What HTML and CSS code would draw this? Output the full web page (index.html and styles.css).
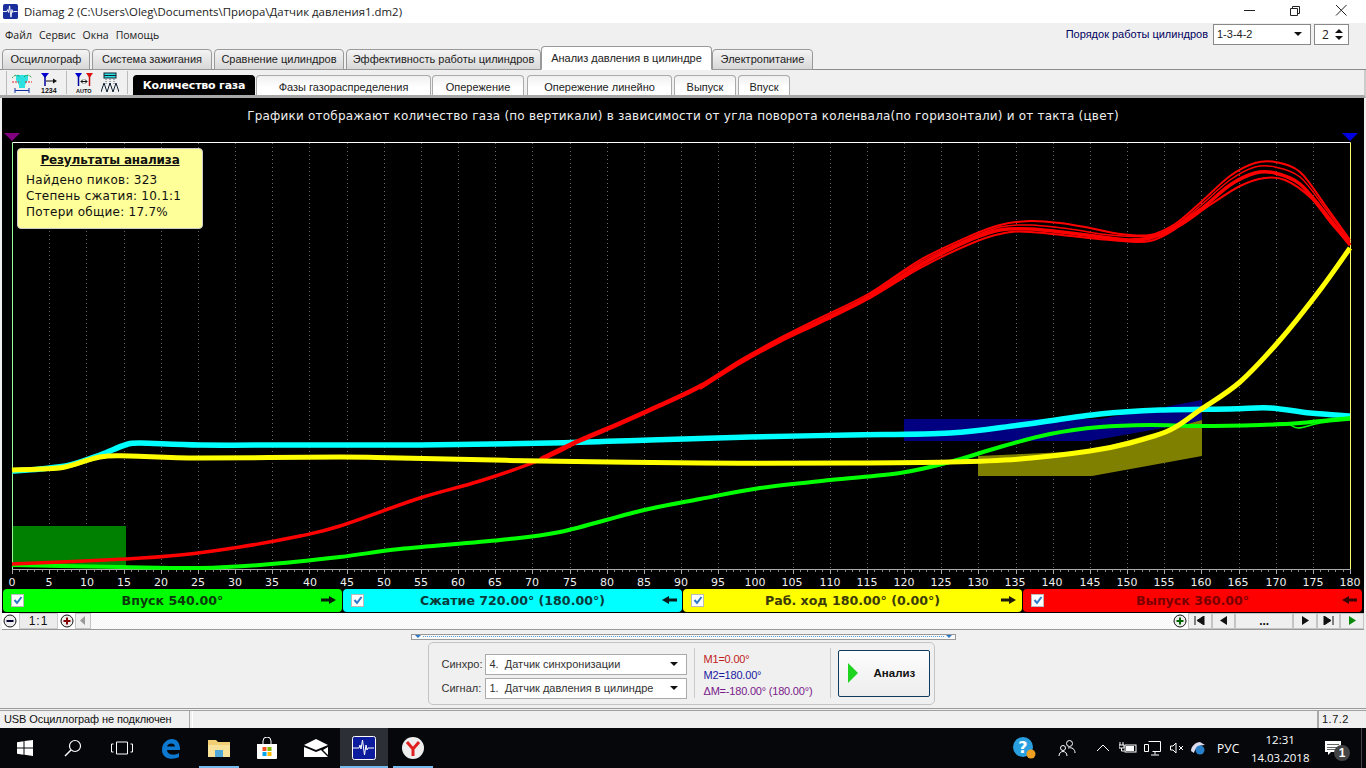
FILE: index.html
```html
<!DOCTYPE html>
<html lang="ru">
<head>
  <meta charset="UTF-8">
  <title>Diamag 2</title>
  <link rel="stylesheet" href="styles.css">
</head>
<body>
  <div class="title-bar">
    <svg class="app-icon" width="15" height="15" viewBox="0 0 16 16"><rect width="16" height="16" rx="2" fill="#1a2f9c"/><path d="M0 8h4l1-2 1 3 1-7 1.500 12 1-8 1 3 1-1h4" fill="none" stroke="#fff" stroke-width="1"/></svg>
    <span class="title-text">Diamag 2 (C:\Users\Oleg\Documents\Приора\Датчик давления1.dm2)</span>
    <div class="win-controls">
      <svg width="46" height="22" viewBox="0 0 46 22"><path d="M18 10.500h11" stroke="#222"/></svg>
      <svg width="46" height="22" viewBox="0 0 46 22"><path d="M18.500 8.500h7v7h-7zM20.500 8.500v-2h7v7h-2" fill="none" stroke="#222"/></svg>
      <svg width="46" height="22" viewBox="0 0 46 22"><path d="M18 5l10.500 10.500M28.500 5L18 15.500" stroke="#222"/></svg>
    </div>
  </div>

  <div class="menu-bar">
    <span>Файл</span><span>Сервис</span><span>Окна</span><span>Помощь</span>
    <div class="order">
      <span class="order-label">Порядок работы цилиндров</span>
      <div class="combo combo-order"><span>1-3-4-2</span><i class="caret"></i></div>
      <div class="spin"><span>2</span><span class="spin-btns"><i class="up"></i><i class="caret"></i></span></div>
    </div>
  </div>

  <div class="main-tabs">
    <div class="tab t1">Осциллограф</div>
    <div class="tab t2">Система зажигания</div>
    <div class="tab t3">Сравнение цилиндров</div>
    <div class="tab t4">Эффективность работы цилиндров</div>
    <div class="tab active t5">Анализ давления в цилиндре</div>
    <div class="tab t6">Электропитание</div>
  </div>

  <div class="sub-bar">
    <div class="tools">
      <svg width="20" height="22" viewBox="0 0 20 22"><path d="M4 3h12v5l-3 5v3H7v-3L4 8z" fill="#2ee0e0"/><path d="M0 6q4-5 8-1M12 5q4-4 8 1" fill="none" stroke="#1a9a3a" stroke-dasharray="2 1"/><path d="M0 10h7M13 10h7" stroke="#d22" stroke-dasharray="2 1"/><path d="M3 16v5M17 16v5M3 18.500h14" stroke="#1030a0"/></svg>
      <svg width="18" height="22" viewBox="0 0 18 22"><path d="M1 1h8L5 6z" fill="#0000d0"/><path d="M5 4v10" stroke="#0000a0" stroke-width="1.500"/><path d="M6 9h9" stroke="#111"/><path d="M13 6.500L17 9l-4 2.500z" fill="#111"/><text x="1" y="21" class="tool-text">1234</text></svg>
      <span class="tool-sep"></span>
      <svg width="18" height="22" viewBox="0 0 18 22"><path d="M0 1h7L3.500 6z" fill="#0000d0"/><path d="M11 1h7l-3.500 5z" fill="#e01010"/><path d="M3.500 4v10" stroke="#0000a0" stroke-width="1.500"/><path d="M14.500 4v10" stroke="#c01010" stroke-width="1.500"/><path d="M6 9.500h6M6 9.500l2-2M6 9.500l2 2M12 9.500l-2-2M12 9.500l-2 2" stroke="#111"/><text x="1" y="21" class="tool-text tool-auto">AUTO</text></svg>
      <svg width="18" height="22" viewBox="0 0 18 22"><rect x="3" y="1" width="12" height="5" fill="#2ee0e0" stroke="#123"/><path d="M3 3.500h12" stroke="#123"/><path d="M5 7v6M9 7v6M13 7v6" stroke="#567" stroke-dasharray="1 1"/><path d="M0 20l3-9 3 9 3-9 3 9 3-9 3 9" fill="none" stroke="#123"/></svg>
      <span class="tool-sep"></span>
    </div>
    <div class="sub-tab current s1">Количество газа</div>
    <div class="sub-tab s2">Фазы газораспределения</div>
    <div class="sub-tab s3">Опережение</div>
    <div class="sub-tab s4">Опережение линейно</div>
    <div class="sub-tab s5">Выпуск</div>
    <div class="sub-tab s6">Впуск</div>
  </div>

  <div class="chart-panel">
    <div class="chart-title">Графики отображают количество газа (по вертикали) в зависимости от угла поворота коленвала(по горизонтали) и от такта (цвет)</div>

    <svg class="chart" id="chart" width="1362" height="462" viewBox="2 126 1362 462">
      <polygon points="4,133 20,133 12,141" fill="#800080"/>
      <polygon points="1342,133 1358,133 1350,141" fill="#0000e0"/>
      <g id="grid"></g>
      <rect x="13" y="526" width="113" height="41" fill="#008000"/>
      <polygon points="904,419 1100,419 1202,400 1202,421 1090,441 904,441" fill="#000080"/>
      <polygon points="978,456 1090,451 1202,420 1202,456 1092,476 978,476" fill="#808000"/>
      <path d="M12.500 142.500H1350.500" stroke="#fff"/>
      <path d="M12.500 142.500V569" stroke="#9f9"/>
      <path d="M1350.500 142.500V569" stroke="#ff6"/>
      <path d="M12 569.500H1351" stroke="#aaa"/>
      <g id="curves"></g>
      <g class="axis-labels">
        <text x="12" y="586">0</text><text x="49" y="586">5</text><text x="87" y="586">10</text><text x="124" y="586">15</text><text x="161" y="586">20</text><text x="198" y="586">25</text><text x="235" y="586">30</text><text x="272" y="586">35</text><text x="310" y="586">40</text><text x="347" y="586">45</text><text x="384" y="586">50</text><text x="421" y="586">55</text><text x="458" y="586">60</text><text x="495" y="586">65</text><text x="532" y="586">70</text><text x="570" y="586">75</text><text x="607" y="586">80</text><text x="644" y="586">85</text><text x="681" y="586">90</text><text x="718" y="586">95</text><text x="755" y="586">100</text><text x="792" y="586">105</text><text x="830" y="586">110</text><text x="867" y="586">115</text><text x="904" y="586">120</text><text x="941" y="586">125</text><text x="978" y="586">130</text><text x="1015" y="586">135</text><text x="1052" y="586">140</text><text x="1090" y="586">145</text><text x="1127" y="586">150</text><text x="1164" y="586">155</text><text x="1201" y="586">160</text><text x="1238" y="586">165</text><text x="1276" y="586">170</text><text x="1313" y="586">175</text><text x="1350" y="586">180</text>
      </g>
    </svg>

    <div class="results">
      <div class="results-head">Результаты анализа</div>
      <div>Найдено пиков: 323</div>
      <div>Степень сжатия: 10.1:1</div>
      <div>Потери общие: 17.7%</div>
    </div>

    <div class="strokes">
      <div class="stroke green">
        <span class="check"><svg width="10" height="10" viewBox="0 0 10 10"><path d="M1.500 5l2.500 3 4.500-6" fill="none" stroke="#2a78c8" stroke-width="2"/></svg></span>
        <span class="stroke-name">Впуск 540.00°</span>
        <svg class="arrow" width="16" height="10" viewBox="0 0 16 10"><path d="M0 3.500h8V1l7 4-7 4V6.500H0z" fill="#0a1a0a"/></svg>
      </div>
      <div class="stroke cyan">
        <span class="check"><svg width="10" height="10" viewBox="0 0 10 10"><path d="M1.500 5l2.500 3 4.500-6" fill="none" stroke="#2a78c8" stroke-width="2"/></svg></span>
        <span class="stroke-name">Сжатие 720.00° (180.00°)</span>
        <svg class="arrow" width="16" height="10" viewBox="0 0 16 10"><path d="M16 3.500H8V1L1 5l7 4V6.500h8z" fill="#0a1a1a"/></svg>
      </div>
      <div class="stroke yellow">
        <span class="check"><svg width="10" height="10" viewBox="0 0 10 10"><path d="M1.500 5l2.500 3 4.500-6" fill="none" stroke="#2a78c8" stroke-width="2"/></svg></span>
        <span class="stroke-name">Раб. ход 180.00° (0.00°)</span>
        <svg class="arrow" width="16" height="10" viewBox="0 0 16 10"><path d="M0 3.500h8V1l7 4-7 4V6.500H0z" fill="#1a1a0a"/></svg>
      </div>
      <div class="stroke red">
        <span class="check"><svg width="10" height="10" viewBox="0 0 10 10"><path d="M1.500 5l2.500 3 4.500-6" fill="none" stroke="#2a78c8" stroke-width="2"/></svg></span>
        <span class="stroke-name">Выпуск 360.00°</span>
        <svg class="arrow" width="16" height="10" viewBox="0 0 16 10"><path d="M16 3.500H8V1L1 5l7 4V6.500h8z" fill="#3a0505"/></svg>
      </div>
    </div>
  </div>

  <div class="scroll-row">
    <svg class="zoom-btn" width="14" height="14" viewBox="0 0 14 14"><circle cx="7" cy="7" r="6" fill="#eee" stroke="#111"/><path d="M3.500 7h7" stroke="#003" stroke-width="2"/></svg>
    <div class="scale">1:1</div>
    <svg class="zoom-btn" width="14" height="14" viewBox="0 0 14 14"><circle cx="7" cy="7" r="6" fill="#eee" stroke="#111"/><path d="M3.500 7h7M7 3.500v7" stroke="#800" stroke-width="2"/></svg>
    <div class="nav nav-left"><svg width="8" height="9" viewBox="0 0 8 9"><path d="M6 0v9L1 4.500z" fill="#999"/></svg></div>
    <div class="track"></div>
    <svg class="zoom-btn" width="14" height="14" viewBox="0 0 14 14"><circle cx="7" cy="7" r="6" fill="#eee" stroke="#111"/><path d="M3.500 7h7M7 3.500v7" stroke="#060" stroke-width="2"/></svg>
    <div class="nav nav-wide"><svg width="11" height="9" viewBox="0 0 11 9"><path d="M1 0v9M10 0v9L3 4.500z" fill="#111" stroke="#111" stroke-width="1"/></svg></div>
    <div class="nav nav-wide"><svg width="9" height="9" viewBox="0 0 9 9"><path d="M8 0v9L1 4.500z" fill="#111"/></svg></div>
    <div class="nav nav-dots">...</div>
    <div class="nav nav-wide"><svg width="9" height="9" viewBox="0 0 9 9"><path d="M1 0v9l7-4.500z" fill="#111"/></svg></div>
    <div class="nav nav-wide"><svg width="11" height="9" viewBox="0 0 11 9"><path d="M10 0v9M1 0v9l7-4.500z" fill="#111" stroke="#111" stroke-width="1"/></svg></div>
    <div class="nav nav-wide"><svg width="9" height="9" viewBox="0 0 9 9"><path d="M1 0v9l7-4.500z" fill="#0a8a0a"/></svg></div>
  </div>

  <div class="lower">
    <div class="splitter"><i></i><span></span><i></i></div>
    <div class="control-box">
      <div class="selects">
        <div class="select-row"><label>Синхро:</label><div class="combo combo-wide"><span>4.&nbsp; Датчик синхронизации</span><i class="caret"></i></div></div>
        <div class="select-row"><label>Сигнал:</label><div class="combo combo-wide"><span>1.&nbsp; Датчик давления в цилиндре</span><i class="caret"></i></div></div>
      </div>
      <div class="markers">
        <div class="m1">M1=0.00°</div>
        <div class="m2">M2=180.00°</div>
        <div class="dm">ΔM=-180.00° (180.00°)</div>
      </div>
      <button class="run-btn"><i class="run-icon"></i><span>Анализ</span></button>
    </div>
  </div>

  <div class="status-bar">
    <div class="status-cell status-usb">USB Осциллограф не подключен</div>
    <div class="status-cell status-fill"></div>
    <div class="status-cell status-ver">1.7.2</div>
  </div>

  <div class="taskbar">
    <div class="task-item"><svg width="16" height="16" viewBox="0 0 16 16"><path d="M0 2.300l6.500-1V7.500H0zM7.500 1.100L16 0v7.500H7.500zM0 8.500h6.500v6.300l-6.500-1zM7.500 8.500H16V16l-8.500-1.200z" fill="#fff"/></svg></div>
    <div class="task-item"><svg width="18" height="18" viewBox="0 0 18 18"><circle cx="11" cy="7" r="5.500" fill="none" stroke="#fff" stroke-width="1.200"/><path d="M7 11l-6 6" stroke="#fff" stroke-width="1.500"/></svg></div>
    <div class="task-item"><svg width="22" height="14" viewBox="0 0 22 14"><path d="M5.500 1h11v12h-11zM2.500 3H.5v8h2M19.500 3h2v8h-2" fill="none" stroke="#fff"/></svg></div>
    <div class="task-item"><svg width="21" height="21" viewBox="0 0 21 21"><path d="M2 12C2 5 7 1 12 1c5 0 8 4 8 10v1H7c0 5 8 6 12 3v4c-5 3-17 3-17-7zM7 8.500h8c0-4-7-4-8 0z" fill="#0c78d0"/></svg></div>
    <div class="task-item running"><svg width="22" height="18" viewBox="0 0 22 18"><path d="M0 1h8l2 2h12v15H0z" fill="#f2cf74"/><path d="M0 6h22v12H0z" fill="#f9e29a"/><path d="M7 11h8v7H7z" fill="#4fa8d8"/></svg></div>
    <div class="task-item"><svg width="22" height="22" viewBox="0 0 22 22"><path d="M1 7h20v14a1 1 0 0 1-1 1H2a1 1 0 0 1-1-1z" fill="#fff"/><path d="M7 7V4a4 4 0 0 1 8 0v3" fill="none" stroke="#fff"/><rect x="6.500" y="10" width="4" height="4" fill="#f25022"/><rect x="11.500" y="10" width="4" height="4" fill="#7fba00"/><rect x="6.500" y="15" width="4" height="4" fill="#00a4ef"/><rect x="11.500" y="15" width="4" height="4" fill="#ffb900"/></svg></div>
    <div class="task-item"><svg width="24" height="18" viewBox="0 0 24 18"><path d="M0 6L12 0l12 6-12 5z" fill="#fff"/><path d="M0 8l12 5 5-2 7 7H0zM24 8v8l-5-5z" fill="#fff"/></svg></div>
    <div class="task-item selected running"><svg width="24" height="24" viewBox="0 0 24 24"><rect x=".5" y=".5" width="23" height="23" rx="2" fill="#0c1c9c" stroke="#fff"/><path d="M1 12h6l1-3 1 4 1.500-9 2 15 1.500-10 1 5 1-2h6" fill="none" stroke="#fff"/></svg></div>
    <div class="task-item running"><svg width="22" height="22" viewBox="0 0 22 22"><circle cx="11" cy="11" r="11" fill="#eee"/><path d="M5 5l6 7 6-7M11 12v7" fill="none" stroke="#e02020" stroke-width="3"/></svg></div>

    <div class="tray">
      <svg class="t-help" width="24" height="24" viewBox="0 0 24 24"><circle cx="11" cy="11" r="10" fill="#2a9fe0"/><text x="11" y="17" class="help-mark">?</text><circle cx="19" cy="18" r="4.500" fill="#f0a020"/></svg>
      <svg class="t-people" width="18" height="18" viewBox="0 0 18 18"><circle cx="11.500" cy="4.500" r="3" fill="none" stroke="#fff"/><circle cx="5" cy="9" r="2.500" fill="none" stroke="#fff"/><path d="M1 17c0-6 8-6 8 0M10 9c4-1 7 1 7 5" fill="none" stroke="#fff"/></svg>
      <svg class="t-chev" width="14" height="8" viewBox="0 0 14 8"><path d="M1 7l6-6 6 6" fill="none" stroke="#fff"/></svg>
      <svg class="t-batt" width="18" height="12" viewBox="0 0 18 12"><path d="M1 0v3M4 0v3M0 3h5v3H0zM2.500 6v3h3" fill="none" stroke="#fff"/><rect x="6" y="3" width="11" height="7" fill="none" stroke="#fff"/><rect x="7" y="4" width="8" height="5" fill="#fff"/></svg>
      <svg class="t-net" width="17" height="15" viewBox="0 0 17 15"><path d="M.5 3.500h4v7h-4zM4.500 .5h12v10h-8M11 10.500v3M7 14h8" fill="none" stroke="#fff"/></svg>
      <svg class="t-vol" width="15" height="12" viewBox="0 0 15 12"><path d="M.5 4h2.500l3-3v10l-3-3H.5z" fill="none" stroke="#fff"/><path d="M9 4l4 4M13 4l-4 4" stroke="#fff"/></svg>
      <svg class="t-sync" width="16" height="14" viewBox="0 0 16 14"><path d="M1 10c0-5 5-9 9-9l5 3c-6 0-10 3-11 8z" fill="#dde"/><circle cx="10" cy="9" r="4.500" fill="#2a80c8"/></svg>
      <span class="t-lang">РУС</span>
      <div class="t-clock"><div>12:31</div><div>14.03.2018</div></div>
      <div class="t-note">
        <svg width="17" height="15" viewBox="0 0 17 15"><path d="M0 0h16v11H6l-3 3v-3H0z" fill="#fff"/><path d="M2 3.500h12M2 6.500h12M2 8.500h8" stroke="#222" stroke-width=".7"/></svg>
        <span class="t-badge">1</span>
      </div>
      <span class="t-end"></span>
    </div>
  </div>

  <script src="chart.js"></script>
</body>
</html>
```

FILE: styles.css
```css
* {
  margin: 0;
  padding: 0;
  box-sizing: border-box;
}

body {
  font-family: "Liberation Sans", Arial, sans-serif;
  font-size: 11px;
  color: #111;
  background: #f0f0f0;
  width: 1366px;
  height: 768px;
  overflow: hidden;
  display: flex;
  flex-direction: column;
}

svg {
  display: block;
  flex: none;
}

/* window title */
.title-bar {
  height: 23px;
  background: white;
  display: flex;
  align-items: center;
  padding-left: 3px;
}

.title-text {
  font-family: "Open Sans", sans-serif;
  font-size: 11.400px;
  margin-left: 6px;
  color: #222;
}

.win-controls {
  display: flex;
  margin-left: auto;
  margin-right: 2px;
}

/* menu */
.menu-bar {
  height: 23px;
  display: flex;
  align-items: center;
  gap: 7px;
  padding-left: 5px;
  padding-top: 2px;
  font-family: "Open Sans", sans-serif;
  font-size: 10.500px;
  color: #222;
}

.order {
  margin-left: auto;
  margin-right: 17px;
  display: flex;
  align-items: center;
  margin-top: -2px;
}

.order-label {
  color: #000060;
  margin-right: 5px;
  font-family: "Liberation Sans", sans-serif;
  font-size: 11px;
}

.combo {
  background: white;
  border: 1px solid #888;
  display: flex;
  align-items: center;
  justify-content: space-between;
  padding: 0 8px 0 3px;
}

.combo-order {
  width: 98px;
  height: 21px;
  font-family: "Liberation Sans", sans-serif;
  font-size: 11px;
}

.caret {
  width: 0;
  height: 0;
  border-left: 4px solid transparent;
  border-right: 4px solid transparent;
  border-top: 4px solid #111;
}

.up {
  width: 0;
  height: 0;
  border-left: 4px solid transparent;
  border-right: 4px solid transparent;
  border-bottom: 4px solid #111;
}

.spin {
  width: 35px;
  height: 21px;
  margin-left: 3px;
  background: white;
  border: 1px solid #888;
  display: flex;
  align-items: center;
  justify-content: space-between;
  padding: 0 5px 0 7px;
  font-size: 12px;
}

.spin-btns {
  display: flex;
  flex-direction: column;
  gap: 3px;
}

/* main tabs */
.main-tabs {
  height: 24px;
  display: flex;
  align-items: flex-end;
  padding-left: 2px;
  gap: 2px;
  border-bottom: 1px solid #8c8c8c;
}

.tab {
  height: 21px;
  margin-bottom: -1px;
  background: linear-gradient(#f4f4f4, #d8d8d8);
  border: 1px solid #999;
  border-radius: 4px 4px 0 0;
  display: flex;
  align-items: center;
  justify-content: center;
  font-size: 11px;
  color: #222;
}

.tab.active {
  height: 24px;
  background: white;
  border-bottom-color: white;
  margin-left: -2px;
  margin-right: -2px;
}

.t1 { width: 88px; }
.t2 { width: 120px; }
.t3 { width: 130px; }
.t4 { width: 195px; }
.t5 { width: 171px; }
.t6 { width: 101px; }

/* second row */
.sub-bar {
  height: 28px;
  display: flex;
  align-items: flex-end;
  padding-left: 6px;
  border-bottom: 3px solid #a8a8a8;
  border-right: 2px solid #ccc;
}

.tools {
  display: flex;
  align-items: center;
  height: 24px;
  width: 126px;
  border-left: 1px solid #bbb;
  padding-left: 5px;
  gap: 8px;
  align-self: flex-start;
  margin-top: 1px;
}

.tool-sep {
  width: 1px;
  height: 23px;
  background: #bbb;
}

.tool-text {
  font-family: "Liberation Sans", sans-serif;
  font-size: 7px;
  font-weight: bold;
  fill: #111;
}

.tool-auto {
  font-size: 5.500px;
}

.sub-tab {
  height: 20px;
  padding-top: 3px;
  background: linear-gradient(#f0f0f0, white 60%);
  border: 1px solid #aaa;
  border-bottom: none;
  border-radius: 4px 4px 0 0;
  display: flex;
  align-items: center;
  justify-content: center;
  font-size: 11px;
  color: #222;
  margin-left: 1px;
}

.sub-tab.current {
  background: black;
  border-color: black;
  color: white;
  font-family: "DejaVu Sans", sans-serif;
  font-weight: bold;
  font-size: 11px;
  letter-spacing: -.2px;
  padding-top: 1px;
}

.s1 { width: 122px; }
.s2 { width: 175px; }
.s3 { width: 92px; margin-left: 1px; }
.s4 { width: 145px; margin-left: 3px; }
.s5 { width: 62px; margin-left: 2px; }
.s6 { width: 52px; margin-left: 2px; }

/* chart */
.chart-panel {
  height: 515px;
  margin: 0 2px;
  background: black;
  position: relative;
  padding-top: 10px;
}

.chart-title {
  height: 18px;
  text-align: center;
  color: #eee;
  font-family: "DejaVu Sans", sans-serif;
  font-size: 12px;
  line-height: 17px;
  letter-spacing: .21px;
}

.axis-labels text {
  font-family: "DejaVu Sans", sans-serif;
  font-size: 11px;
  fill: #eee;
  text-anchor: middle;
}

.results {
  position: absolute;
  left: 15px;
  top: 50px;
  width: 186px;
  height: 81px;
  background: #ffff99;
  border: 1px solid #ccc;
  border-radius: 4px;
  padding: 3px 8px;
  font-family: "DejaVu Sans", sans-serif;
  font-size: 12px;
  line-height: 16px;
  letter-spacing: .25px;
  color: #111;
}

.results-head {
  font-weight: bold;
  text-decoration: underline;
  text-align: center;
  letter-spacing: -.15px;
  margin-bottom: 4px;
}

.strokes {
  display: flex;
  gap: 1px;
  padding: 0 0 0 1px;
  height: 24px;
  margin-top: 1px;
}

.stroke {
  flex: none;
  width: 339px;
  height: 23px;
  border-radius: 4px;
  display: flex;
  align-items: center;
  padding: 0 5px 0 8px;
  font-family: "DejaVu Sans", sans-serif;
  font-size: 12.600px;
  font-weight: bold;
}

.stroke-name {
  flex: 1;
  text-align: center;
}

.green { background: #00ff00; color: #0c3a0c; }
.cyan { background: #00ffff; color: #0a3a3a; }
.yellow { background: #ffff00; color: #3a3a0a; }
.red { background: #ff0000; color: #7a0000; }

.check {
  width: 13px;
  height: 13px;
  background: white;
  border: 1px solid #bbb;
  display: flex;
  align-items: center;
  justify-content: center;
}

/* scroll row */
.scroll-row {
  height: 17px;
  margin-left: 2px;
  margin-right: 2px;
  display: flex;
  align-items: center;
  border-bottom: 1px solid #999;
  background: white;
}

.scale {
  width: 39px;
  height: 16px;
  background: #ececec;
  border: 1px solid #ccc;
  text-align: center;
  font-size: 12px;
  line-height: 15px;
  letter-spacing: 1px;
  margin: 0 1px;
}

.zoom-btn {
  margin: 0 1px;
}

.nav {
  height: 16px;
  background: #efefef;
  border: 1px solid #c4c4c4;
  display: flex;
  align-items: center;
  justify-content: center;
}

.nav-left { width: 16px; }
.nav-wide { width: 23.600px; }
.nav-dots { width: 58px; font-weight: bold; font-size: 12px; line-height: 12px; }

.track {
  flex: 1;
  height: 16px;
  background: repeating-conic-gradient(#f4f4f4 0 25%, white 0 50%) 0 0 / 2px 2px;
}

/* lower panel */
.lower {
  height: 80px;
  padding-top: 4px;
  border-bottom: 1px solid #9a9a9a;
  display: flex;
  flex-direction: column;
  align-items: center;
}

.splitter {
  width: 545px;
  height: 6px;
  border: 1px solid #999;
  background: #f8f8f8;
  display: flex;
  align-items: center;
  padding: 0 3px;
}

.splitter i {
  width: 0;
  height: 0;
  border-left: 3px solid transparent;
  border-right: 3px solid transparent;
  border-top: 3px solid #2a78c8;
}

.splitter span {
  flex: 1;
  border-top: 1px dotted #5a9ad8;
  margin: 0 2px;
}

.control-box {
  width: 507px;
  height: 63px;
  margin-top: 2px;
  margin-right: 4px;
  border: 1px solid #c4c4c4;
  border-radius: 5px;
  display: flex;
  align-items: center;
  padding-left: 13px;
}

.selects {
  display: flex;
  flex-direction: column;
  gap: 3px;
  width: 245px;
  margin-top: 6px;
}

.select-row {
  display: flex;
  align-items: center;
  justify-content: space-between;
  color: #333;
}

.combo-wide {
  width: 202px;
  height: 21px;
  border-color: #aaa;
  font-size: 11px;
  padding-left: 4px;
}

.markers {
  margin-left: 7px;
  border-left: 1px solid #ccc;
  border-right: 1px solid #ccc;
  height: 50px;
  width: 137px;
  padding: 3px 0 0 9px;
  font-size: 11px;
  line-height: 16px;
  letter-spacing: -.2px;
}

.m1 { color: #c02020; }
.m2 { color: #1a1aa0; }
.dm { color: #7a1a8a; }

.run-btn {
  width: 92px;
  height: 47px;
  margin-left: 7px;
  background: linear-gradient(#fdfdfd, #ededed);
  border: 1px solid #123a5a;
  border-radius: 2px;
  display: flex;
  align-items: center;
  padding-left: 9px;
  font-family: "Liberation Sans", sans-serif;
  font-size: 11.500px;
  font-weight: bold;
  color: #111;
  gap: 16px;
}

.run-icon {
  width: 0;
  height: 0;
  border-top: 10px solid transparent;
  border-bottom: 10px solid transparent;
  border-left: 10px solid #1ed41e;
}

/* status bar */
.status-bar {
  height: 18px;
  margin-top: 1px;
  display: flex;
  font-size: 11px;
  border-top: 1px solid #a0a0a0;
}

.status-cell {
  border-left: 1px solid #fff;
  border-right: 1px solid #a8a8a8;
  padding: 2px 3px;
  background: #f0f0f0;
}

.status-usb { width: 190px; border-left: none; padding-left: 4px; letter-spacing: -.1px; }
.status-fill { flex: 1; margin-left: 2px; }
.status-ver { width: 48px; letter-spacing: .5px; border-left: 1px solid #a8a8a8; border-right: none; }

/* windows taskbar */
.taskbar {
  flex: 1;
  background: #05070b;
  display: flex;
  color: white;
}

.task-item {
  width: 48px;
  display: flex;
  align-items: center;
  justify-content: center;
  position: relative;
  margin-left: 0.500px;
}

.task-item.running::after {
  content: "";
  position: absolute;
  left: 4px;
  right: 4px;
  bottom: 0;
  height: 2px;
  background: #76b9ed;
}

.task-item.selected {
  background: #2c3036;
}

.task-item.selected::after {
  left: 0;
  right: 0;
}

.tray {
  margin-left: auto;
  display: flex;
  align-items: center;
  width: 354px;
  padding-right: 4px;
}

.t-people { margin-left: 22px; }
.t-chev { margin-left: 20px; }
.t-batt { margin-left: 9px; }
.t-net { margin-left: 7px; }
.t-vol { margin-left: 9px; }
.t-sync { margin-left: 5px; }

.help-mark {
  font-family: "DejaVu Sans", sans-serif;
  font-size: 16px;
  font-weight: bold;
  fill: white;
  text-anchor: middle;
}

.t-lang {
  margin-left: 11px;
  font-family: "Open Sans", sans-serif;
  font-size: 12px;
}

.t-clock {
  margin-left: 11px;
  width: 60px;
  padding-top: 1px;
  text-align: center;
  font-family: "Open Sans", sans-serif;
  font-size: 11.500px;
  line-height: 18px;
}

.t-note {
  margin-left: 15px;
  width: 26px;
  position: relative;
}

.t-badge {
  position: absolute;
  left: 9px;
  top: 4px;
  width: 16px;
  height: 16px;
  border-radius: 50%;
  background: #444;
  font-size: 12px;
  font-weight: bold;
  line-height: 16px;
  text-align: center;
}

.t-end {
  margin-left: auto;
  width: 1px;
  height: 40px;
  background: #444;
}
```

FILE: chart.js
```js
// chart data in page pixels, the svg viewBox lines up with the page
var NS = 'http://www.w3.org/2000/svg';
var X0 = 12.5, XSTEP = (1350.5 - 12.5) / 180;

var curves = [
  { color: '#00ffff', width: 5.5, pts: [[12,471],[40,469],[70,465],[100,455],[125,445],[140,443],[200,445],[300,445],[420,445],[550,443],[650,440],[750,437],[850,435],[950,433],[1020,425],[1100,414],[1160,410],[1230,409],[1270,408],[1310,413],[1350,416]] },
  { color: '#00ff00', width: 4, pts: [[12,565],[60,566],[120,567],[200,568],[260,565],[340,557],[400,549],[500,540],[560,532],[640,511],[700,499],[760,488],[830,480],[900,473],[950,462],[1000,447],[1050,434],[1100,427],[1150,425],[1200,426],[1260,425],[1300,423],[1350,418]] },
  { color: '#00ff00', width: 1.5, pts: [[1260,425],[1285,423],[1298,428],[1320,423],[1350,420]] },
  { color: '#ff0000', width: 3.5, pts: [[12,564],[126,559],[180,555],[240,547],[300,536],[340,526],[420,498],[480,481],[540,460],[580,441],[620,424],[660,406],[700,387],[740,362],[780,340],[820,321],[870,296],[920,265],[970,240],[1000,230],[1030,229],[1070,233],[1110,238],[1130,240],[1150,238],[1170,230],[1200,210],[1230,185],[1255,173],[1275,173],[1300,184],[1325,213],[1350,245]] },
  { color: '#ff0000', width: 2, pts: [[540,458],[580,439],[620,422],[660,404],[700,385],[740,360],[780,338],[820,318],[870,293],[920,260],[970,236],[1000,225],[1030,221],[1060,223],[1090,228],[1120,234],[1150,235],[1175,224],[1200,203],[1230,176],[1255,163],[1275,162],[1300,172],[1325,205],[1350,240]] },
  { color: '#ff0000', width: 2, pts: [[700,389],[740,364],[780,342],[820,323],[870,298],[920,268],[970,244],[1000,234],[1030,232],[1110,240],[1150,241],[1180,226],[1210,205],[1240,186],[1265,178],[1285,180],[1310,197],[1330,222],[1350,245]] },
  { color: '#ff0000', width: 1.5, pts: [[870,294],[920,262],[970,238],[1000,227],[1030,225],[1070,229],[1110,235],[1150,236],[1175,226],[1200,206],[1230,180],[1255,167],[1275,167],[1300,177],[1325,208],[1350,242]] },
  { color: '#ffff00', width: 5, pts: [[12,470],[40,469],[65,467],[100,457],[130,456],[200,458],[340,457],[400,458],[540,461],[700,463],[850,463],[950,462],[1020,459],[1090,451],[1130,443],[1170,430],[1200,410],[1240,382],[1280,340],[1320,290],[1350,248]] }
];

function line(parent, d, stroke, dash) {
  var p = document.createElementNS(NS, 'path');
  p.setAttribute('d', d);
  p.setAttribute('stroke', stroke);
  p.setAttribute('fill', 'none');
  if (dash) p.setAttribute('stroke-dasharray', dash);
  parent.appendChild(p);
  return p;
}

// catmull-rom through the points
function smooth(pts) {
  var d = 'M' + pts[0][0] + ' ' + pts[0][1];
  for (var i = 0; i < pts.length - 1; i++) {
    var a = pts[i - 1] || pts[i], b = pts[i], c = pts[i + 1], e = pts[i + 2] || c;
    d += 'C' + (b[0] + (c[0] - a[0]) / 6) + ' ' + (b[1] + (c[1] - a[1]) / 6) + ' ' +
         (c[0] - (e[0] - b[0]) / 6) + ' ' + (c[1] - (e[1] - b[1]) / 6) + ' ' + c[0] + ' ' + c[1];
  }
  return d;
}

var grid = document.getElementById('grid');
for (var i = 0; i <= 180; i++) {
  var x = Math.floor(X0 + i * XSTEP) + 0.5;
  if (i % 5 === 0) {
    if (i > 0 && i < 180) line(grid, 'M' + x + ' 143V569', '#666', '1 3');
    line(grid, 'M' + x + ' 570v4', '#aaa');
  } else {
    line(grid, 'M' + x + ' 570v2', '#888');
  }
}

var group = document.getElementById('curves');
curves.forEach(function (c) {
  line(group, smooth(c.pts), c.color).setAttribute('stroke-width', c.width);
});
```
